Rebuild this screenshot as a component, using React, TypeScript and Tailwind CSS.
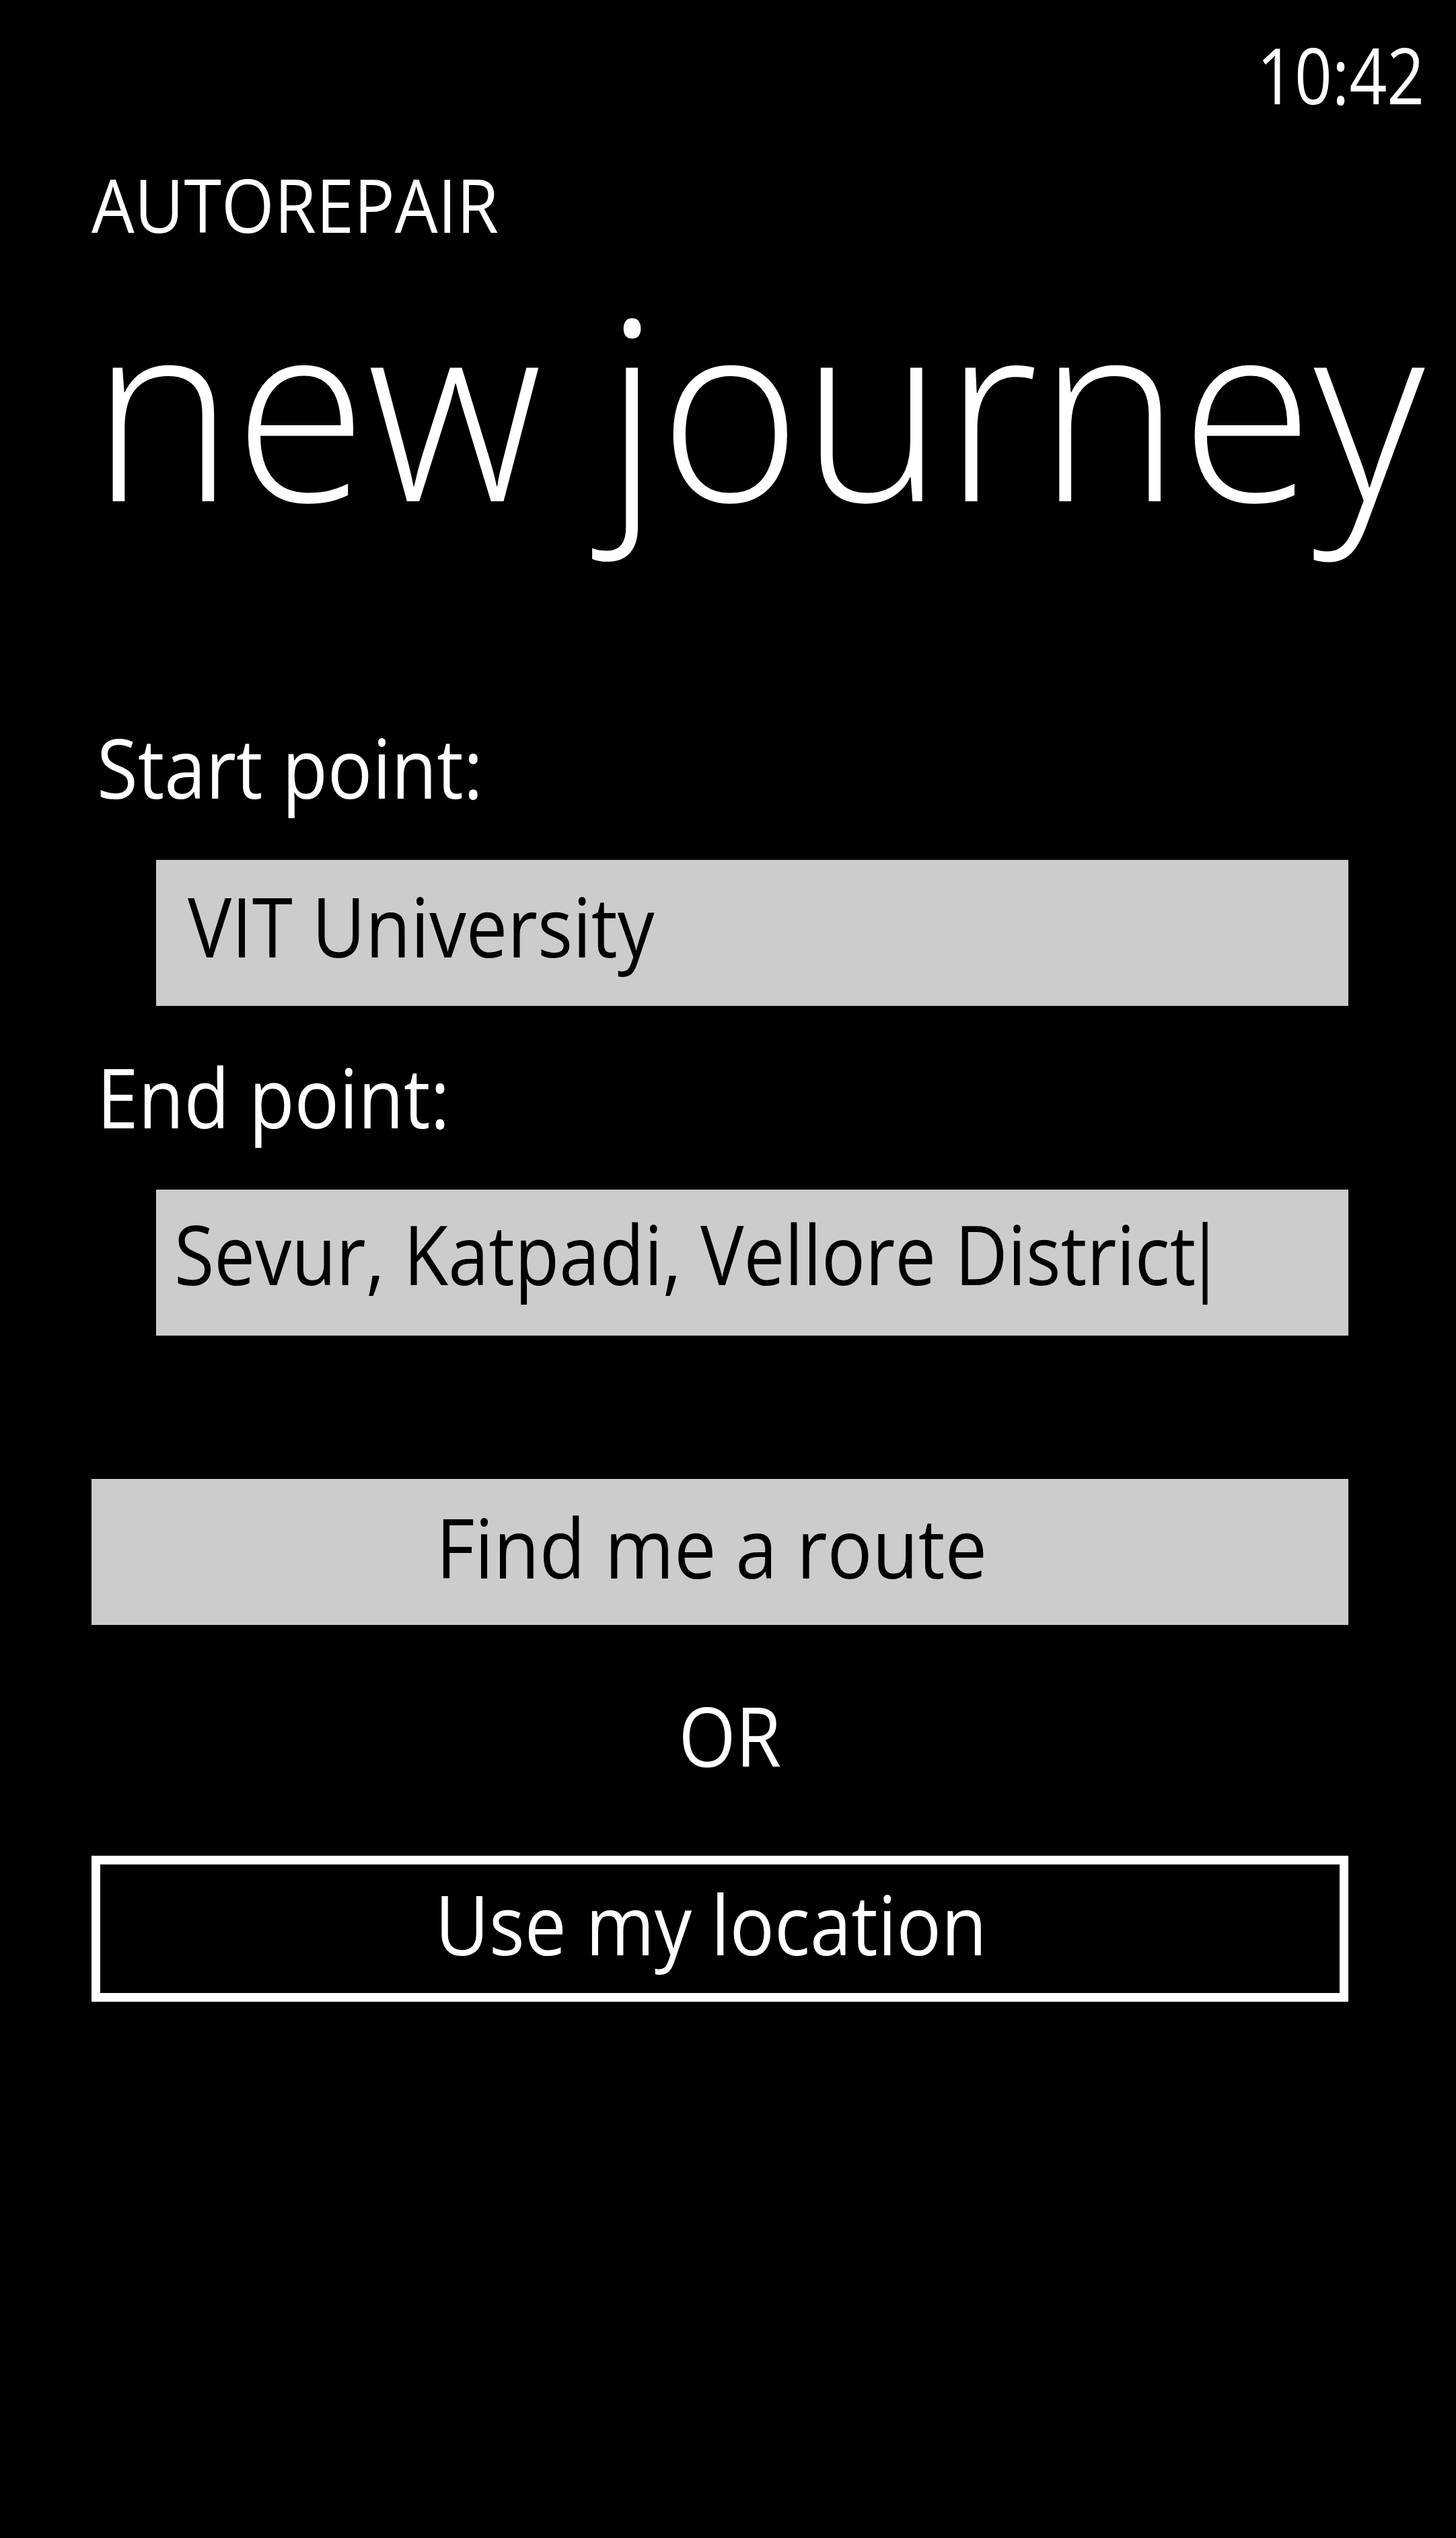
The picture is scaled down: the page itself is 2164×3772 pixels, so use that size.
export default function App() {
  return (
    <div className="min-h-[3772px] w-full bg-black text-white font-['Open_Sans',sans-serif]">
      <div className="flex justify-end pr-[47px] pt-[53px]">
        <div className="text-[115px] leading-none scale-x-[0.85] origin-right">10:42</div>
      </div>
      <div className="flex flex-col pl-[136px] pr-[160px]">
        <div className="mt-[80px] text-[110px] leading-none scale-x-[0.918] origin-left">AUTOREPAIR</div>
        <div className="mt-[55px] text-[374px] leading-none font-light scale-x-[0.961] origin-left whitespace-nowrap">new journey</div>
        <div className="mt-[291px] ml-[8px] text-[123px] leading-none scale-x-[0.9] origin-left">Start point:</div>
        <div className="mt-[77px] ml-[96px] h-[217px] bg-[#cccccc] pl-[47px] pt-[36px]">
          <div className="text-[123px] leading-none text-black scale-x-[0.89] origin-left">VIT University</div>
        </div>
        <div className="mt-[73px] ml-[8px] text-[123px] leading-none scale-x-[0.9] origin-left">End point:</div>
        <div className="mt-[77px] ml-[96px] h-[217px] bg-[#cccccc] pl-[27px] pt-[33px]">
          <div className="flex items-start text-[123px] leading-none text-black scale-x-[0.88] origin-left whitespace-nowrap">
            <span>Sevur, Katpadi, Vellore District</span>
            <span className="ml-[12px] mt-[15px] h-[123px] w-[8px] bg-black" />
          </div>
        </div>
        <button className="mt-[213px] h-[217px] bg-[#cccccc] text-black flex items-start justify-center pt-[39px] pr-[26px]">
          <span className="block text-[123px] leading-none scale-x-[0.905] origin-center">Find me a route</span>
        </button>
        <div className="mt-[102px] pl-[30px] flex justify-center">
          <span className="block text-[123px] leading-none scale-x-[0.89] origin-center">OR</span>
        </div>
        <button className="mt-[118px] h-[217px] border-[13px] border-white bg-black text-white flex items-start justify-center pt-[26px] pr-[26px]">
          <span className="block text-[123px] leading-none scale-x-[0.898] origin-center">Use my location</span>
        </button>
      </div>
    </div>
  );
}
